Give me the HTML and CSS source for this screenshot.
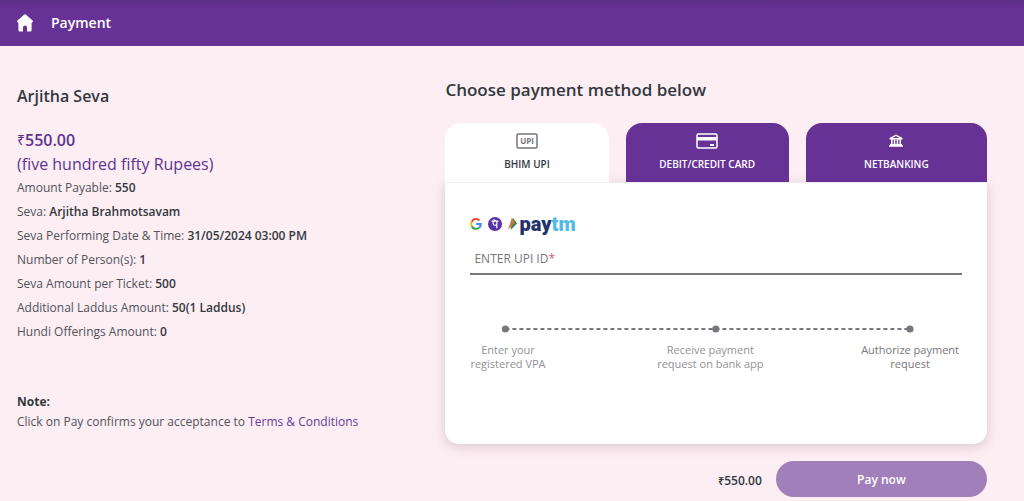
FILE: index.html
```
<!DOCTYPE html>
<html lang="en">
<head>
<meta charset="utf-8">
<meta name="viewport" content="width=device-width, initial-scale=1">
<title>Payment</title>
<link rel="stylesheet" href="styles.css">
</head>
<body>
<header class="topbar">
  <a class="home" href="#" aria-label="Home">
    <svg width="16" height="18" viewBox="0 0 16 18"><path fill="#fff" d="M7 .8a1.4 1.4 0 0 1 2 0l6.600 5.800a1 1 0 0 1 .2 1.200L14.600 9v7.200a1.400 1.400 0 0 1-1.400 1.400H10V13.500a2 2 0 0 0-4 0v4.100H2.800a1.400 1.400 0 0 1-1.400-1.400V9L.2 7.800a1 1 0 0 1 .2-1.200z"/></svg>
  </a>
  <span class="topbar-title">Payment</span>
</header>
<main class="layout">
  <section class="summary">
    <h1 class="seva-name">Arjitha Seva</h1>
    <p class="total"><span class="rupee">₹</span><strong class="total-value">550.00</strong></p>
    <p class="total-words">(five hundred fifty Rupees)</p>
    <ul class="details">
      <li>Amount Payable: <strong>550</strong></li>
      <li>Seva: <strong>Arjitha Brahmotsavam</strong></li>
      <li>Seva Performing Date &amp; Time: <strong>31/05/2024 03:00 PM</strong></li>
      <li>Number of Person(s): <strong>1</strong></li>
      <li>Seva Amount per Ticket: <strong>500</strong></li>
      <li>Additional Laddus Amount: <strong>50(1 Laddus)</strong></li>
      <li>Hundi Offerings Amount: <strong>0</strong></li>
    </ul>
    <h2 class="note-title">Note:</h2>
    <p class="note">Click on Pay confirms your acceptance to <a class="terms" href="#">Terms &amp; Conditions</a></p>
  </section>
  <section class="payment">
    <h2 class="payment-title">Choose payment method below</h2>
    <div class="tabs">
      <button class="tab tab-active" type="button">
        <svg class="tab-icon" width="22" height="18" viewBox="0 0 22 18"><rect x="1" y="2" width="20" height="14" rx="1.500" fill="none" stroke="#75757b" stroke-width="1.500"/><text class="upi-mark" x="11" y="12" text-anchor="middle">UPI</text></svg>
        BHIM UPI
      </button>
      <button class="tab" type="button">
        <svg class="tab-icon" width="22" height="18" viewBox="0 0 22 18"><rect x="1" y="2" width="20" height="14" rx="1.500" fill="none" stroke="#fff" stroke-width="1.500"/><path fill="#fff" d="M1 5h20v3.500H1zM14 12h4v2h-4z"/></svg>
        DEBIT/CREDIT CARD
      </button>
      <button class="tab" type="button">
        <svg class="tab-icon" width="16" height="18" viewBox="0 0 16 18"><path fill="#fff" fill-rule="evenodd" d="M8 2.500 14.500 6v1.500h-13V6zM8 4 4.500 6h7zM3 7.500h1.600V12H3zM5.800 7.500h1.500V12H5.800zM8.700 7.500h1.500V12H8.700zM11.500 7.500H13V12h-1.500zM2 12h12v1.300h1v1.500H1v-1.500h1z"/></svg>
        NETBANKING
      </button>
    </div>
    <div class="card">
      <div class="brands">
        <svg width="12" height="12" viewBox="0 0 12 12" fill="none" stroke-width="2"><path stroke="#e84a3d" d="M1.700 3.800A4.800 4.800 0 0 1 9.500 2.500"/><path stroke="#f7b90b" d="M1.700 3.800A4.800 4.800 0 0 0 1.700 8.200"/><path stroke="#34a353" d="M1.700 8.200A4.800 4.800 0 0 0 9 9.800"/><path stroke="#4285f4" d="M9 9.800A4.800 4.800 0 0 0 10.800 6H6.200"/></svg>
        <svg width="14" height="14" viewBox="0 0 14 14"><circle cx="7" cy="7" r="7" fill="#5a34a5"/><path d="M3.500 4.200h7M8.800 4.200v7M5.200 4.500v2.200c0 2 3.400 2 3.400.3M5.500 2.500l2.500 1.500" fill="none" stroke="#fff" stroke-width="1.200"/></svg>
        <svg width="9" height="14" viewBox="0 0 9 14"><path fill="#23804a" d="M5 1 9 6.500 2.500 13z"/><path fill="#c77a45" d="M4 .5 7 6 0 12.500z"/></svg>
        <span class="paytm">pay<span class="paytm-light">tm</span></span>
      </div>
      <div class="field">
        <label class="field-label" for="upi">ENTER UPI ID<span class="required">*</span></label>
        <input class="field-input" id="upi" type="text" required>
      </div>
      <svg class="track" width="100%" height="8">
        <line x1="7.200%" y1="4" x2="89.500%" y2="4" stroke="#77777c" stroke-width="2" stroke-dasharray="4 3"/>
        <circle cx="7.200%" cy="4" r="3.600" fill="#77777c"/><circle cx="50%" cy="4" r="3.600" fill="#77777c"/><circle cx="89.500%" cy="4" r="3.600" fill="#77777c"/>
      </svg>
      <ol class="steps">
        <li>Enter your<br>registered VPA</li>
        <li class="step-middle">Receive payment<br>request on bank app</li>
        <li class="step-last">Authorize payment<br>request</li>
      </ol>
    </div>
    <div class="actions">
      <span class="pay-amount"><span class="rupee-small">₹</span>550.00</span>
      <button class="pay" type="button">Pay now</button>
    </div>
  </section>
</main>
</body>
</html>
```
FILE: styles.css
```
* {
  box-sizing: border-box;
}

body {
  margin: 0;
  background: #fceef3;
  color: #33383f;
  font: 12px/24px "Open Sans", "Noto Sans", sans-serif;
}

h1, h2, p, ul, ol {
  margin: 0;
  padding: 0;
  list-style: none;
}

strong {
  font-weight: 600;
}

.topbar {
  display: flex;
  align-items: center;
  gap: 18px;
  height: 46px;
  padding: 0 17px;
  background: linear-gradient(#5b2e86, #663296 10px);
  color: #fff;
}

.home {
  display: flex;
}

.topbar-title {
  font-size: 14px;
  font-weight: 600;
}

.layout {
  display: grid;
  grid-template-columns: 411fr 541fr;
  column-gap: 17px;
  padding: 32px 37px 0 17px;
}

.seva-name {
  margin: 6px 0 20px;
  font-size: 16px;
  font-weight: 600;
  line-height: 24px;
}

.total,
.total-words {
  color: #5f338f;
  font-size: 16px;
}

.total {
  display: flex;
}

.total-value {
  font-size: 16px;
  font-weight: 600;
}

.rupee {
  font-size: 14px;
}

.rupee-small {
  font-size: 11px;
}

.details {
  color: #50525a;
}

.details strong {
  color: #33383f;
}

.note-title {
  margin-top: 48px;
  font-size: 12px;
  font-weight: 700;
  line-height: 20px;
}

.note {
  line-height: 20px;
  color: #50525a;
}

.terms {
  color: #693a9b;
  text-decoration: none;
}

.payment-title {
  font-size: 17px;
  font-weight: 600;
  line-height: 24px;
}

.tabs {
  display: grid;
  grid-template-columns: 9fr 9fr 10fr;
  gap: 17px;
  margin-top: 21px;
}

.tab {
  display: flex;
  flex-direction: column;
  align-items: center;
  gap: 5px;
  height: 59px;
  padding: 9px 0 0;
  border: 0;
  border-radius: 16px 16px 0 0;
  background: #663296;
  color: #fff;
  font: 600 10px/18px "Open Sans", sans-serif;
}

.tab-active {
  background: #fff;
  color: #33383f;
}

.upi-mark {
  fill: #75757b;
  font: 700 8px "Open Sans", sans-serif;
}

.card {
  min-height: 262px;
  padding: 31px 25px;
  border-top: 1px solid #eee;
  border-radius: 0 0 14px 14px;
  background: #fff;
  box-shadow: 0 3px 12px rgba(90, 50, 70, 0.2);
}

.brands {
  display: flex;
  align-items: center;
  gap: 6px;
  height: 20px;
}

.paytm {
  margin-left: -4px;
  color: #20336b;
  font: 900 20px/20px Roboto, sans-serif;
}

.paytm-light {
  color: #55b9ea;
}

.field {
  display: flex;
  gap: 4px;
  margin-top: 11px;
  padding-left: 4px;
  border-bottom: 2px solid #77777c;
  line-height: 28px;
}

.field-label {
  color: #77777c;
}

.required {
  color: #d05a78;
}

.field-input {
  flex: 1;
  min-width: 0;
  height: 24px;
  border: 0;
  outline: 0;
  background: transparent;
  font: inherit;
}

.track {
  display: block;
  margin-top: 50px;
}

.steps {
  display: flex;
  justify-content: space-between;
  margin-top: 10px;
  padding-right: 3px;
  color: #929296;
  font-size: 11px;
  line-height: 14px;
  text-align: center;
}

.step-middle {
  padding-left: 14px;
}

.step-last {
  color: #77777c;
}

.actions {
  display: flex;
  justify-content: flex-end;
  align-items: center;
  gap: 14px;
  margin-top: 17px;
}

.pay-amount {
  padding-top: 4px;
  font-weight: 600;
}

.pay {
  width: 39%;
  height: 36px;
  border: 0;
  border-radius: 18px;
  background: #a17fbb;
  color: #fff;
  font: 600 12px "Open Sans", sans-serif;
}
```
